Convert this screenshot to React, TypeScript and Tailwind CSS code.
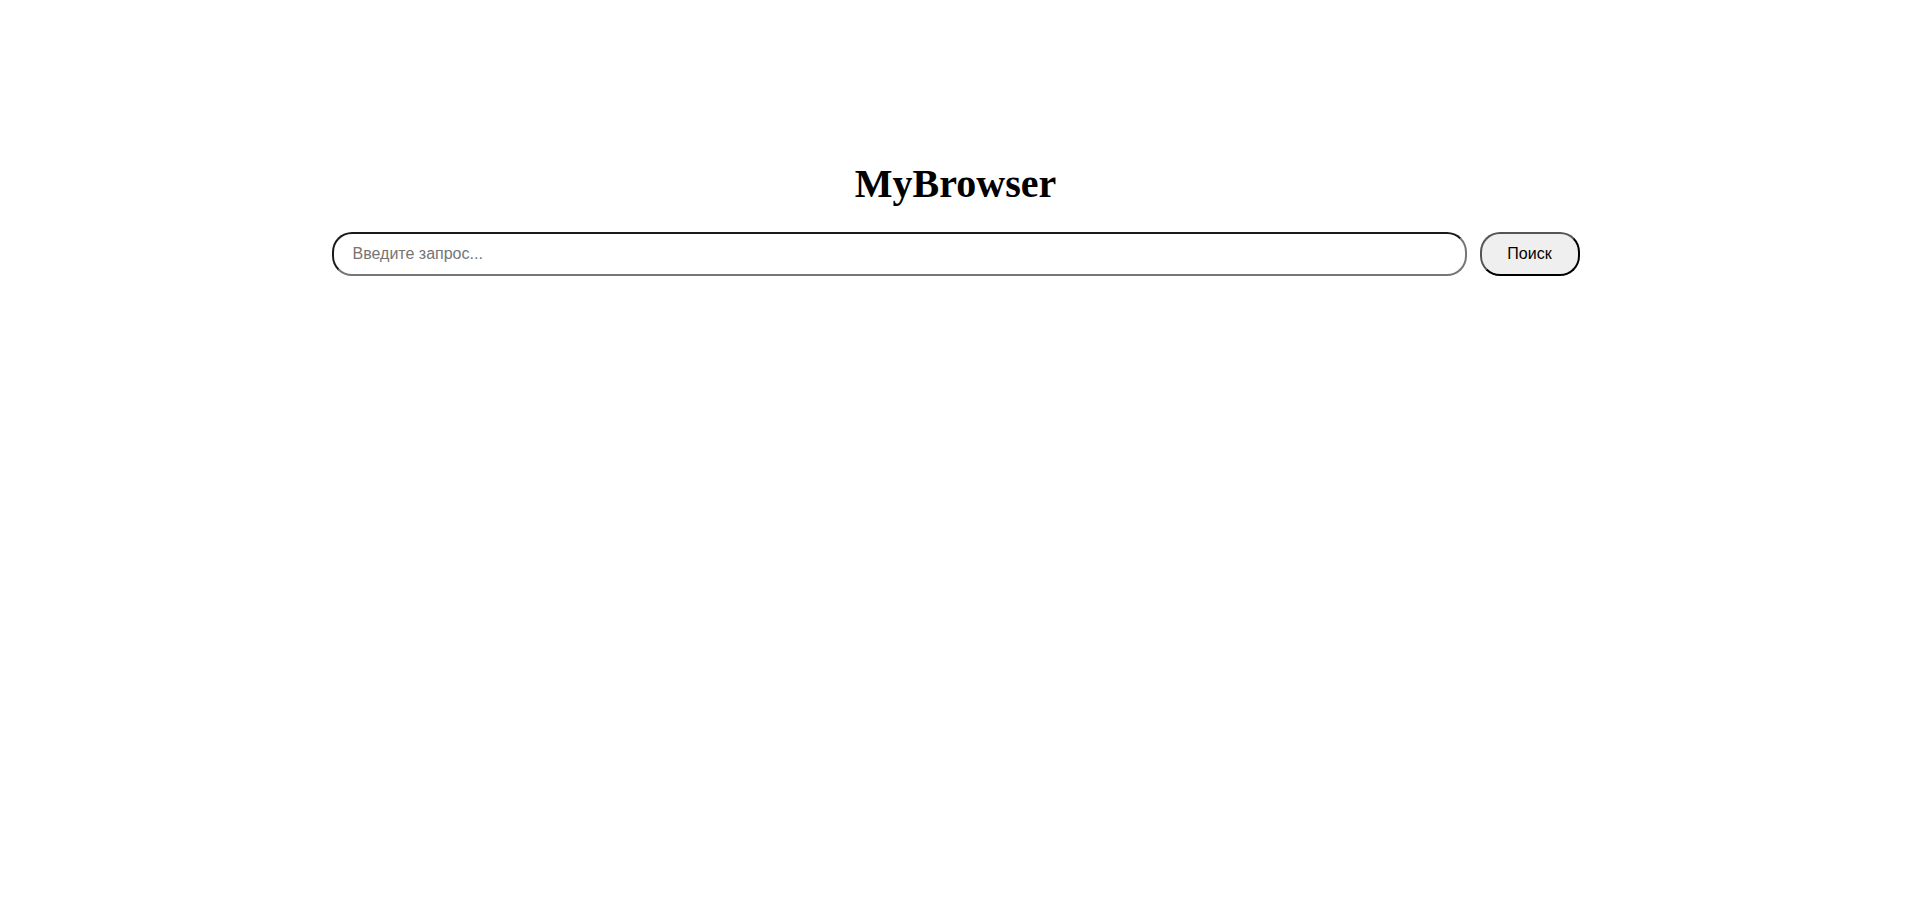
import React from "react";

export default function App() {
  return (
    // Page
    <main className="w-full min-h-screen bg-white flex flex-col items-center pt-[161px]">

      {/* Title */}
      <h1 className="text-[40px] leading-[46px] font-bold text-black font-['Liberation_Serif','Times_New_Roman',serif] m-0">
        MyBrowser
      </h1>

      {/* Search row */}
      <form
        className="w-[1248px] flex items-center gap-[13px] mt-[25px]"
        onSubmit={(e) => e.preventDefault()}
      >
        <input
          type="text"
          placeholder="Введите запрос..."
          className="flex-1 h-[44px] rounded-[20px] border-2 border-t-[#1a1a1a] border-l-[#1a1a1a] border-b-[#767676] border-r-[#767676] bg-white pl-[19px] pr-4 text-[16px] text-black placeholder:text-[#757575] font-['Liberation_Sans',Arial,sans-serif] outline-none"
        />
        <button
          type="submit"
          className="w-[100px] h-[44px] rounded-[20px] border-2 border-t-[#555555] border-l-[#555555] border-b-black border-r-black bg-[#efefef] text-[16px] text-black font-['Liberation_Sans',Arial,sans-serif]"
        >
          Поиск
        </button>
      </form>
    </main>
  );
}
